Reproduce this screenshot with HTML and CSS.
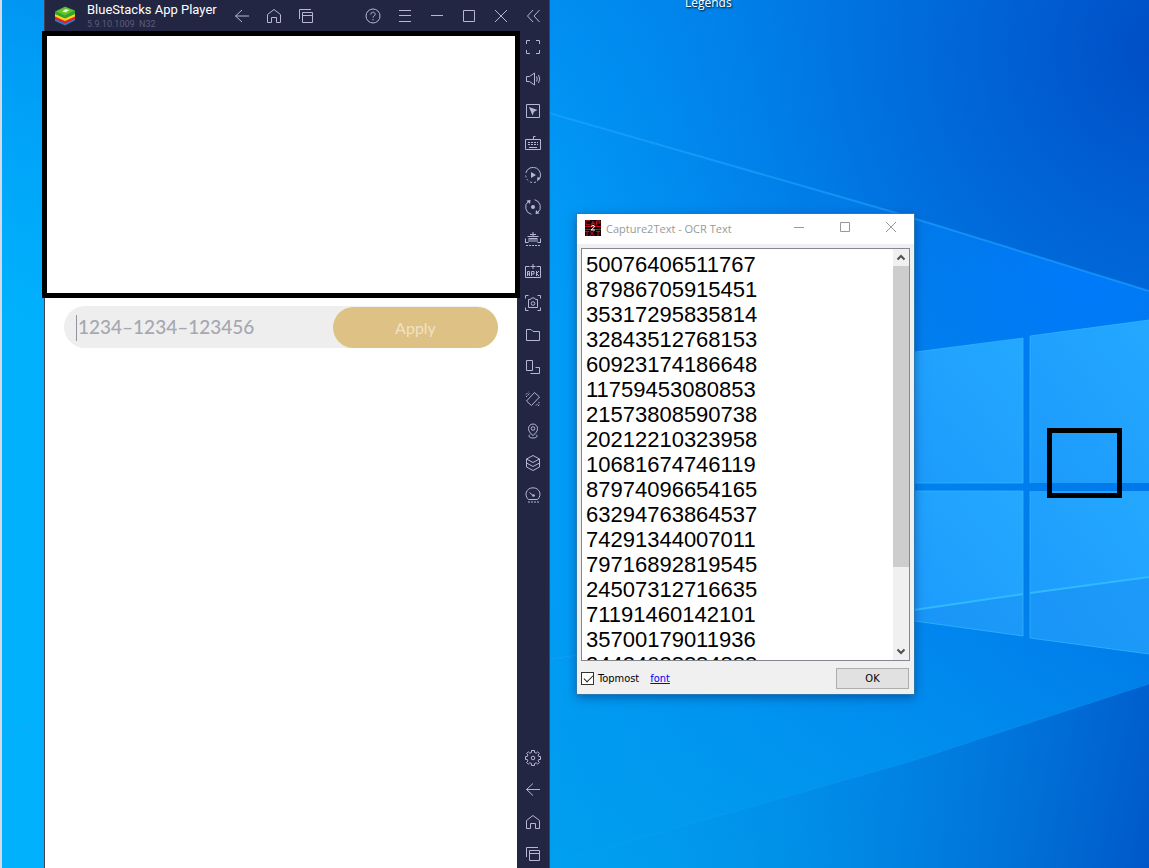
FILE: index.html
```html
<!DOCTYPE html>
<html lang="en">
<head>
    <meta charset="UTF-8">
    <title>Desktop</title>
    <link rel="stylesheet" href="styles.css">
</head>
<body>
<div class="desktop">
    <svg class="wallpaper" viewBox="0 0 1149 868" preserveAspectRatio="none" aria-hidden="true">
        <defs>
            <linearGradient id="base" x1="0" y1="0" x2="1" y2="0">
                <stop offset="0" stop-color="#00b2fd"/>
                <stop offset=".48" stop-color="#009cf6"/>
                <stop offset=".8" stop-color="#0084f0"/>
                <stop offset="1" stop-color="#0074ea"/>
            </linearGradient>
            <linearGradient id="top" x1="0" y1="0" x2="0" y2="1">
                <stop offset="0" stop-color="#0084ec" stop-opacity=".6"/>
                <stop offset="1" stop-color="#0094f8" stop-opacity="0"/>
            </linearGradient>
            <linearGradient id="bottom" x1="0" y1="0" x2="0" y2="1">
                <stop offset="0" stop-color="#0098e8" stop-opacity="0"/>
                <stop offset="1" stop-color="#00a0ec" stop-opacity=".7"/>
            </linearGradient>
            <radialGradient id="corner" gradientUnits="userSpaceOnUse" cx="1170" cy="50" r="620">
                <stop offset="0" stop-color="#004cc4"/>
                <stop offset=".45" stop-color="#0068d8" stop-opacity=".8"/>
                <stop offset="1" stop-color="#0080e8" stop-opacity="0"/>
            </radialGradient>
            <radialGradient id="glow" gradientUnits="userSpaceOnUse" cx="1090" cy="270" r="300">
                <stop offset="0" stop-color="#007cff" stop-opacity=".9"/>
                <stop offset="1" stop-color="#0090ff" stop-opacity="0"/>
            </radialGradient>
            <linearGradient id="low" gradientUnits="userSpaceOnUse" x1="640" y1="740" x2="1149" y2="868">
                <stop offset="0" stop-color="#0094ea" stop-opacity="0"/>
                <stop offset=".5" stop-color="#007cde" stop-opacity=".7"/>
                <stop offset="1" stop-color="#0058c8"/>
            </linearGradient>
            <linearGradient id="pane" x1="0" y1="1" x2="1" y2="0">
                <stop offset="0" stop-color="#1c9afc"/>
                <stop offset="1" stop-color="#24a8ff"/>
            </linearGradient>
        </defs>
        <rect width="1149" height="868" fill="url(#base)"/>
        <rect width="1149" height="330" fill="url(#top)"/>
        <rect x="549" width="600" height="660" fill="url(#corner)"/>
        <path d="M549 113 893 212 1149 291V560H549z" fill="url(#glow)"/>
        <rect x="549" y="560" width="600" height="308" fill="url(#bottom)"/>
        <path d="M549 864 912 761 1149 684V868H549z" fill="url(#low)"/>
        <g fill="none" stroke="#22a4ff">
            <path d="M549 113 893 212 1149 291" stroke-width="2" opacity=".6"/>
            <path d="M549 864 912 761 1149 684" opacity=".25"/>
            <path d="M0 731 44 727M549 659 914 610" opacity=".5"/>
        </g>
        <g fill="url(#pane)">
            <path d="M900 354 1023 338V483H900z"/>
            <path d="M1030 336 1149 320V483H1030z"/>
            <path d="M900 491H1023V636L900 619z"/>
            <path d="M1030 491H1149V654L1030 638z"/>
        </g>
        <path d="M900 612 1023 594V636L900 619zM1030 593 1149 577V654L1030 638z" fill="#1890f4" opacity=".5"/>
        <g fill="none" stroke="#30baff">
            <path d="M900 612 1023 594M1030 593 1149 577" stroke-width="2"/>
            <path d="M900 354 1023 338V483H900M1030 483V336L1149 320M900 491H1023V636L900 619M1030 491V638L1149 654" opacity=".7"/>
        </g>
    </svg>

    <span class="shortcut">Legends</span>

    <!-- app player -->
    <main class="player">
        <header class="player-bar">
            <svg class="logo" viewBox="0 0 20 20" aria-hidden="true">
                <path d="M0 12.5 10 17l10-4.500v2L10 19.500 0 15z" fill="#1d7fd0"/>
                <path d="M0 10 10 14.500 20 10v3L10 17.500 0 13z" fill="#e8202a"/>
                <path d="M0 7.500 10 12l10-4.500v3L10 15 0 10.500z" fill="#ffd21a"/>
                <path d="M0 5.500 10 0.500 20 4.500v3.500L10 12.500 0 8z" fill="#2ea62d"/>
                <path d="M1 5.500 10 1l9 3.500L10 9.500z" fill="#63c32c"/>
                <path d="M7 5.500 10.500 3l4 1L11 6.500z" fill="#e3f6d2"/>
            </svg>
            <div class="player-name">
                <h1>BlueStacks App Player</h1>
                <p>5.9.10.1009&nbsp; N32</p>
            </div>
            <nav class="tools">
                <button aria-label="Back"><svg viewBox="0 0 16 16"><path d="M15 8H1.500M8 2 1.500 8 8 14"/></svg></button>
                <button aria-label="Home"><svg viewBox="0 0 16 16"><path d="M1.500 14.500V6.500L8 1.500l6.500 5v8h-4v-5h-5v5z"/></svg></button>
                <button aria-label="Recent apps"><svg viewBox="0 0 16 16"><path d="M1.500 11V1.500H13M4.500 4.500h10v10h-10zM4.500 7.500h10"/></svg></button>
            </nav>
            <nav class="tools tools-end">
                <button aria-label="Help"><svg viewBox="0 0 16 16"><circle cx="8" cy="8" r="7"/><path d="M5.800 6.500C5.800 3.500 10.200 3.500 10.200 6.300 10.200 8 8 7.800 8 9.700M8 11v1.300"/></svg></button>
                <button aria-label="Menu"><svg viewBox="0 0 16 16"><path d="M2 2.500h12M2 7.500h12M2 13.500h12"/></svg></button>
                <button aria-label="Minimize"><svg viewBox="0 0 16 16"><path d="M2 7.500h12"/></svg></button>
                <button aria-label="Maximize"><svg viewBox="0 0 16 16"><path d="M2.500 2.500h11v11h-11z"/></svg></button>
                <button aria-label="Close"><svg viewBox="0 0 16 16"><path d="M2 2l12 12M14 2 2 14"/></svg></button>
                <button aria-label="Collapse toolbar"><svg viewBox="0 0 16 16"><path d="M8 2 2.500 8 8 14M14.500 2 9 8l5.500 6"/></svg></button>
            </nav>
        </header>
        <div class="player-body">
            <section class="screen">
                <form class="coupon" action="#">
                    <label class="code">
                        <i class="caret"></i>
                        <input type="text" placeholder="1234–1234–123456" aria-label="Coupon code">
                    </label>
                    <button type="submit">Apply</button>
                </form>
            </section>
            <aside class="side">
                <button aria-label="Full screen"><svg viewBox="0 0 16 16"><path d="M5 1.500H1.500V5M11 1.500h3.500V5M5 14.500H1.500V11M11 14.500h3.500V11"/></svg></button>
                <button aria-label="Volume"><svg viewBox="0 0 16 16"><path d="M1.500 5.500h3L9.500 2v12L4.500 10.500h-3zM11.500 5.500q1.500 2.500 0 5M13.500 4q2.500 4 0 8"/></svg></button>
                <button aria-label="Lock cursor"><svg viewBox="0 0 16 16"><path d="M1.500 1.500h13v13h-13z"/><path class="solid" d="M4 4 12.500 7 9 8.800 7.500 12.500z"/></svg></button>
                <button aria-label="Game controls"><svg viewBox="0 0 16 16"><path d="M.500 4.500h15v10H.500zM8.500 4V1.500H10.500"/><path d="M3 7.500h10M3 9.500h10" stroke-dasharray="2 1"/><path d="M4 12.500h8"/></svg></button>
                <button aria-label="Macro recorder"><svg viewBox="0 0 16 16"><path d="M.800 6A7.500 7.500 0 1 1 13.500 13"/><path d="M.700 8.500A7.500 7.500 0 0 0 12 14.500" stroke-dasharray="2 2"/><path class="solid" d="M6 5v6l5-3zM12 14.500l3.500-3.500-3-1z"/></svg></button>
                <button aria-label="Sync"><svg viewBox="0 0 16 16"><path d="M6.500 15.300A7.400 7.400 0 0 1 3.500 2.200M9.500.700A7.400 7.400 0 0 1 12.500 13.800"/><path class="solid" d="M1.500 1.500 5.500 1 5 5zM14.500 14.500l-4 .500.500-4z"/><circle class="solid" cx="8" cy="8" r="2"/></svg></button>
                <button aria-label="Real-time translation"><svg viewBox="0 0 16 16"><path d="M8 1v4M5 3.500h6M2.500 5.500h11M.500 12V7.500M15.500 12V7.500M.500 11.500h3M12.500 11.500h3M4 11V7M6 11V7M8 11V7M10 11V7M12 11V7M4 7.500h8"/><path d="M1 14.500h15" stroke-dasharray="2 1"/></svg></button>
                <button aria-label="Install APK"><svg viewBox="0 0 16 16"><path d="M4.500 3.500H.500v11h15v-11h-4M8 1v5M5.500 3.500h5"/><path d="M2.500 13V8.500h2V13M2.500 11h2M6.500 13V8.500h2.500v2.500H6.500M11.500 8v5M14 8l-2.500 2.500L14 13"/></svg></button>
                <button aria-label="Screenshot"><svg viewBox="0 0 16 16"><path d="M3.500.500h-3v3M12.500.500h3v3M3.500 15.500h-3v-3M12.500 15.500h3v-3M3.500 4.500h2l1-1.500h3l1 1.500h2v8h-9z"/><circle cx="8" cy="8.500" r="1.800"/></svg></button>
                <button aria-label="Media folder"><svg viewBox="0 0 16 16"><path d="M1.500 13.500v-11h4.500l2 2h6.500v9z"/></svg></button>
                <button aria-label="Rotate"><svg viewBox="0 0 16 16"><path d="M1.500 1.500h6v10h-6zM10.500 8.500h4v6h-9"/></svg></button>
                <button aria-label="Shake"><svg viewBox="0 0 16 16"><path d="M1.500 10 9.500 1.500l5 4.500-8 8.500z"/><path d="M1 3.500 3.500 1M1 6l4-4M11 14.500l4-4M13 15l2-2" stroke-dasharray="2 1"/></svg></button>
                <button aria-label="Location"><svg viewBox="0 0 16 16"><path d="M8 12.500C5 10 3.500 8 3.500 5.500a4.500 4.500 0 0 1 9 0C12.500 8 11 10 8 12.500zM5 11.500c-2 1.500-1 3.500 3 3.500s5-2 3-3.500"/><circle cx="8" cy="5.500" r="1.800"/></svg></button>
                <button aria-label="Multi-instance manager"><svg viewBox="0 0 16 16"><path d="M8 .500 14.500 4v8L8 15.500 1.500 12V4zM1.500 4 8 7.500 14.500 4M1.500 8 8 11.500 14.500 8"/></svg></button>
                <button aria-label="Performance"><svg viewBox="0 0 16 16"><path d="M3.500 12.500C-1.500 8 1.500.800 8 .800s9.500 7.200 4.500 11.700zM4.500 5.500 8 8.500"/><circle class="solid" cx="8.500" cy="8.500" r="1.300"/><path d="M3 15h11" stroke-dasharray="2 1"/></svg></button>
                <div class="side-end">
                    <button aria-label="Settings"><svg viewBox="0 0 16 16"><path d="M6.500.500h3v2l1.700.700 1.400-1.400 1.800 1.800L13 5l.700 1.500h1.800v3h-1.800L13 11l1.400 1.400-1.800 1.800-1.400-1.400-1.700.700v2h-3v-2l-1.700-.700-1.400 1.400-1.800-1.800L3 11l-.700-1.500H.500v-3h1.800L3 5 1.600 3.600l1.800-1.800 1.400 1.400 1.700-.700z"/><circle cx="8" cy="8" r="1.800"/></svg></button>
                    <button aria-label="Back"><svg viewBox="0 0 16 16"><path d="M15 7.500H1.500M8 1.500 1.500 7.500 8 13.500"/></svg></button>
                    <button aria-label="Home"><svg viewBox="0 0 16 16"><path d="M1.500 14.500V6.500L8 1.500l6.500 5v8h-4v-5h-5v5z"/></svg></button>
                    <button aria-label="Recent apps"><svg viewBox="0 0 16 16"><path d="M1.500 11V1.500H13M4.500 4.500h10v10h-10zM4.500 7.500h10"/></svg></button>
                </div>
            </aside>
        </div>
    </main>

    <!-- ocr result dialog -->
    <section class="dialog">
        <header class="dialog-bar">
            <svg class="dialog-icon" viewBox="0 0 16 16" aria-hidden="true">
                <path d="M0 0h16v16H0z" fill="#120204"/>
                <path d="M0 6h16v1H0zM0 9h16v1H0z" fill="#c0101c"/>
                <path d="M5 .700H1v4h4M6 5l2-4 2 4M7 3.500h2M11.500 5V1H15v2h-3.500M0 11.500h4M2 11v5M5 11l4 5M9 11l-4 5M11 11.500h4M13 11v5" fill="none" stroke="#c0101c"/>
                <path d="M6 6.500Q8 4 9.500 6q0 1.500-3.500 4h4" fill="none" stroke="#fff"/>
            </svg>
            <h2>Capture2Text - OCR Text</h2>
            <div class="dialog-tools">
                <button aria-label="Minimize"><svg viewBox="0 0 12 12"><path d="M1 5.500h10"/></svg></button>
                <button aria-label="Maximize"><svg viewBox="0 0 12 12"><path d="M1.500 .500h9v9h-9z"/></svg></button>
                <button aria-label="Close"><svg viewBox="0 0 12 12"><path d="M1 0l10 10M11 0 1 10"/></svg></button>
            </div>
        </header>
        <div class="result">
            <textarea aria-label="OCR text" spellcheck="false">50076406511767
87986705915451
35317295835814
32843512768153
60923174186648
11759453080853
21573808590738
20212210323958
10681674746119
87974096654165
63294763864537
74291344007011
79716892819545
24507312716635
71191460142101
35700179011936
24424038884888</textarea>
            <div class="scrollbar">
                <svg viewBox="0 0 16 17"><path d="M4.500 10.500 8 7l3.500 3.500"/></svg>
                <i class="thumb"></i>
                <svg viewBox="0 0 16 17"><path d="M4.500 6.500 8 10l3.500-3.500"/></svg>
            </div>
        </div>
        <footer class="dialog-foot">
            <label><input type="checkbox" checked>Topmost</label>
            <a href="#">font</a>
            <button>OK</button>
        </footer>
    </section>

    <!-- capture frames -->
    <div class="frame frame-input"></div>
    <div class="frame frame-small"></div>
</div>
</body>
</html>
```
FILE: styles.css
```css
*{
    box-sizing: border-box;
}
body{
    margin:0;
    font-family: "Open Sans", "Noto Sans", sans-serif;
}
h1, h2, p{
    margin:0;
    font-weight: normal;
}
button{
    margin:0;
    padding:0;
    border:0;
    background:none;
    font-family: inherit;
}
svg{
    display: block;
}

/* desktop */
.desktop{
    position: relative;
    height:100vh;
    overflow: hidden;
    background:#009cf6;
    border-left:2px solid #d5d9e6;
}
.wallpaper{
    position: absolute;
    left:-2px;
    top:0;
    width:calc(100% + 2px);
    height:100%;
}
.shortcut{
    position: absolute;
    left:683px;
    top:-5px;
    color:#fff;
    font-size:12px;
    line-height:16px;
    text-shadow:1px 1px 2px #000;
}

/* app player */
.player{
    position: absolute;
    left:42px;
    top:0;
    bottom:0;
    width:506px;
    display: flex;
    flex-direction: column;
    background:#232642;
    border:solid #41415a;
    border-width:0 1px;
}
.player-bar{
    display: flex;
    height:31px;
    flex:none;
    align-items: center;
    padding-left:10px;
}
.logo{
    width:20px;
    height:20px;
    margin-right:12px;
}
.player-name{
    width:139px;
    font-family: Roboto, sans-serif;
    white-space: nowrap;
}
.player-name h1{
    color:#fff;
    font-size:13px;
    line-height:16px;
}
.player-name p{
    color:#5b5d7a;
    font-size:9px;
    line-height:12px;
}
.tools{
    display: flex;
}
.tools-end{
    margin-left:auto;
}
.tools button, .side button{
    display: flex;
    width:32px;
    height:32px;
    flex:none;
    align-items: center;
    justify-content: center;
}
.tools button{
    height:30px;
}
.tools svg, .side svg{
    width:16px;
    height:16px;
    fill:none;
    stroke:#b5b7d3;
}
.side .solid{
    fill:#b5b7d3;
    stroke:none;
}
.player-body{
    display: flex;
    flex:1;
    min-height:0;
}
.screen{
    flex:1;
    padding:275px 19px 0;
    background:#fff;
}
.side{
    display: flex;
    width:32px;
    flex-direction: column;
}
/* last button runs off the bottom edge a little */
.side-end{
    margin-top:auto;
    margin-bottom:-2px;
}

/* coupon field */
.coupon{
    display: flex;
    height:42px;
    padding-top:1px;
    border-radius:21px;
    background:#eee;
}
.code{
    display: flex;
    flex:1;
    align-items: center;
    padding-left:12px;
}
.caret{
    width:1px;
    height:26px;
    background:#92949c;
}
.code input{
    width:100%;
    padding:0 0 2px 1px;
    border:0;
    outline:0;
    background:none;
    font-family: Lato, sans-serif;
    font-size:19px;
    font-weight:500;
}
.code input::placeholder{
    color:#a5a7b1;
}
.coupon button{
    width:165px;
    border-radius:21px;
    background:#dec185;
    color:#f0e2c4;
    font-family: Lato, sans-serif;
    font-size:16px;
}

/* ocr dialog */
.dialog{
    position: absolute;
    left:575px;
    top:214px;
    width:337px;
    background:#f0f0f0;
    box-shadow:0 0 0 1px #2878b4, 0 3px 10px rgba(0,30,90,.5);
}
.dialog-bar{
    display: flex;
    height:30px;
    align-items: center;
    padding:0 0 2px 8px;
    background:#fff;
}
.dialog-icon{
    width:16px;
    height:16px;
    margin-right:5px;
}
.dialog-bar h2{
    color:#999;
    font-size:11px;
}
.dialog-tools{
    display: flex;
    margin-left:auto;
}
.dialog-tools button{
    display: flex;
    width:46px;
    height:28px;
    align-items: center;
    justify-content: center;
}
.dialog-tools svg{
    width:12px;
    height:12px;
    fill:none;
    stroke:#999;
}
.result{
    display: flex;
    height:413px;
    margin:4px 4px 0;
    border:1px solid #828790;
    background:#fff;
}
.result textarea{
    flex:1;
    min-width:0;
    padding:3px 4px 0;
    border:0;
    outline:0;
    overflow: hidden;
    resize: none;
    color:#000;
    font-family: "Liberation Sans", Arial, sans-serif;
    font-size:22px;
    line-height:25px;
}
.scrollbar{
    display: flex;
    width:16px;
    flex-direction: column;
    background:#f0f0f0;
}
.scrollbar svg{
    width:16px;
    height:17px;
    fill:none;
    stroke:#505050;
    stroke-width:2;
}
.thumb{
    height:301px;
    margin-bottom:auto;
    background:#cdcdcd;
}
.dialog-foot{
    display: flex;
    height:33px;
    align-items: center;
    padding:2px 5px 0 4px;
    font-family: "DejaVu Sans Condensed", "Open Sans", sans-serif;
    font-size:11px;
}
.dialog-foot label{
    display: flex;
    align-items: center;
}
.dialog-foot input{
    width:13px;
    height:13px;
    margin:0 4px 0 0;
    appearance: none;
    border:1px solid #333;
    background:#fff;
    position: relative;
}
.dialog-foot input:checked::after{
    content:"";
    position: absolute;
    left:2px;
    top:2px;
    width:8px;
    height:4px;
    border:solid #222;
    border-width:0 0 1px 1px;
    transform:rotate(-45deg);
}
.dialog-foot a{
    margin-left:11px;
    color:#00f;
}
.dialog-foot button{
    width:73px;
    height:21px;
    margin-left:auto;
    border:1px solid #adadad;
    background:#e1e1e1;
    font-size:11px;
}

/* capture frames */
.frame{
    position: absolute;
    border:5px solid #000;
    pointer-events: none;
}
.frame-input{
    left:40px;
    top:31px;
    width:478px;
    height:267px;
}
.frame-small{
    left:1045px;
    top:428px;
    width:75px;
    height:70px;
}
```
